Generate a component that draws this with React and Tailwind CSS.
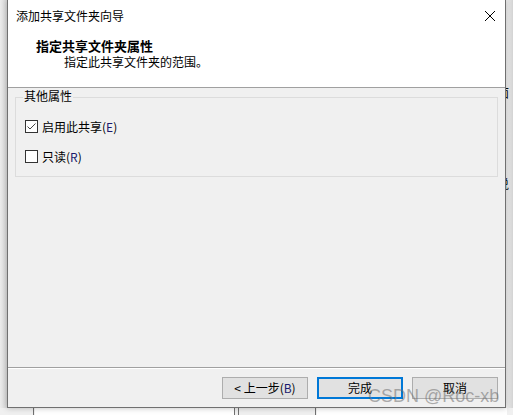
import React from 'react';

const font = { fontFamily: '"Noto Sans CJK SC", "Noto Sans", sans-serif' };

const CheckBox = ({ checked, label, hot }) => (
  <div className="flex items-center gap-[4px] h-[13px]">
    <div className="w-[13px] h-[13px] border border-[#333333] bg-white flex items-center justify-center">
      {checked && (
        <svg width="11" height="11" viewBox="0 0 11 11">
          <path d="M1.5 5.5 L4 8 L9.5 2.5" fill="none" stroke="#444" strokeWidth="1" />
        </svg>
      )}
    </div>
    <span className="text-[12px] leading-none text-black">
      {label}(<span className="text-[#1a1a6e]">{hot}</span>)
    </span>
  </div>
);

const Button = ({ children, primary }) => (
  <button
    className={
      'w-[86px] h-[22px] text-[12px] leading-none text-black bg-[#e1e1e1] flex items-center justify-center ' +
      (primary ? 'border-2 border-[#0078d7]' : 'border border-[#adadad]')
    }
  >
    {children}
  </button>
);

const App = () => {
  return (
    <div className="relative w-[513px] h-[415px] overflow-hidden bg-[#ececec]" style={font}>
      {/* desktop behind the dialog */}
      <div className="absolute left-0 top-0 w-[7px] h-full bg-gradient-to-r from-[#ececec] to-[#d9d9d9]" />
      <div className="absolute left-[506px] top-0 w-[7px] h-full bg-gradient-to-r from-[#f4f4f4] to-[#d4d4d4] overflow-hidden">
        <div className="absolute left-[-9px] top-[87px] text-[12px] text-black leading-none">面</div>
        <div className="absolute left-[-9px] top-[178px] text-[12px] text-black leading-none">说</div>
      </div>
      <div className="absolute left-0 top-[408px] w-full h-[7px] bg-[#f0f0f0]">
        <div className="absolute left-[33px] top-0 h-full border-l border-[#707070]" />
        <div className="absolute left-[35px] top-0 w-[200px] h-full bg-white" />
        <div className="absolute left-[234px] top-0 h-full border-l border-[#707070]" />
        <div className="absolute left-[238px] top-0 h-full border-l border-[#707070]" />
        <div className="absolute left-[315px] top-0 h-full border-l border-[#707070]" />
        <div className="absolute left-[317px] top-0 w-[190px] h-full bg-white" />
      </div>

      {/* dialog window */}
      <div className="absolute left-[7px] top-[-1px] w-[499px] h-[409px] border border-[#707070] bg-[#f0f0f0] flex flex-col shadow-[0_0_6px_rgba(0,0,0,0.25)]">
        <div className="bg-white h-[88px] border-b border-[#a0a0a0] flex flex-col">
          <div className="h-[32px] flex items-center justify-between pl-[8px] pr-[9px]">
            <span className="text-[12px] text-black leading-none">添加共享文件夹向导</span>
            <svg width="12" height="12" viewBox="0 0 12 12">
              <path d="M1 1 L11 11 M11 1 L1 11" stroke="#000" strokeWidth="1" />
            </svg>
          </div>
          <div className="pl-[28px] pt-[7px] text-[13px] font-bold leading-none text-black">指定共享文件夹属性</div>
          <div className="pl-[56px] pt-[4px] text-[12px] leading-none text-black">指定此共享文件夹的范围。</div>
        </div>

        <div className="flex-1 flex flex-col px-[7px]">
          <div className="relative mt-[9px] h-[80px] border border-[#dcdcdc] pt-[22px] pl-[9px] flex flex-col gap-[17px]">
            <span className="absolute left-[7px] top-[-8px] px-[1px] bg-[#f0f0f0] text-[12px] leading-none text-black">
              其他属性
            </span>
            <CheckBox checked label="启用此共享" hot="E" />
            <CheckBox label="只读" hot="R" />
          </div>
        </div>

        <div className="h-[40px] border-t border-[#a0a0a0] shadow-[inset_0_1px_0_#ffffff] flex items-start justify-end gap-[9px] pt-[9px] pr-[7px]">
          <Button>
            <span>&lt; 上一步(<span className="text-[#1a1a6e]">B</span>)</span>
          </Button>
          <Button primary>完成</Button>
          <Button>取消</Button>
        </div>
      </div>

      {/* watermark */}
      <div
        className="absolute left-[368px] top-[387px] text-[18px] leading-none text-[rgba(110,110,110,0.55)] whitespace-nowrap"
        style={{ fontFamily: '"Liberation Sans", Arial, sans-serif' }}
      >
        CSDN @Roc-xb
      </div>
    </div>
  );
};

export default App;
